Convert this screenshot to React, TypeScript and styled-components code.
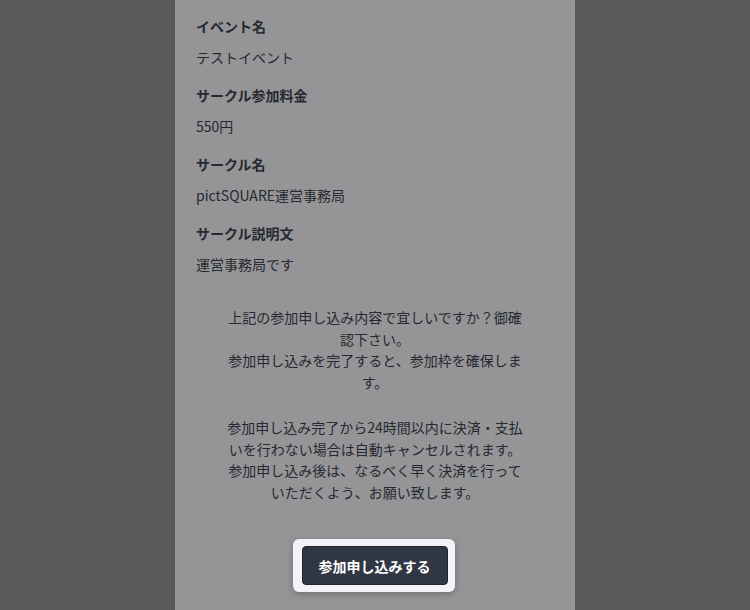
import React from "react";
import styled, { createGlobalStyle } from "styled-components";

const Global = createGlobalStyle`
  html, body { margin: 0; padding: 0; background: #58595a; }
  body { font-family: "Noto Sans CJK JP", "Noto Sans", sans-serif; }
`;

const Page = styled.div`
  display: flex;
  justify-content: center;
  min-height: 610px;
  background: #58595a;
`;

const Panel = styled.div`
  width: 400px;
  box-sizing: border-box;
  background: #959597;
  padding: 16px 21px 20px;
  color: #26292f;
  font-size: 14px;
  line-height: 21px;
`;

const Field = styled.div`
  display: flex;
  flex-direction: column;
  gap: 10px;
  margin-bottom: 17px;
`;

const Label = styled.div`
  font-weight: 700;
`;

const Value = styled.div``;

const Notice = styled.div`
  width: 302px;
  margin: 32px auto 0;
  text-align: center;
  line-height: 21.5px;
`;

const Para = styled.p<{ $gap?: number }>`
  margin: ${(p) => p.$gap ?? 0}px 0 0;
`;

const ButtonRow = styled.div`
  display: flex;
  justify-content: center;
  margin-top: 36px;
  padding-right: 3px;
`;

const Ring = styled.div`
  padding: 7px 7px 7px 9px;
  background: #f3f3f7;
  border-radius: 6px;
  box-shadow: 0 2px 6px rgba(0, 0, 0, 0.25);
`;

const Button = styled.button`
  width: 146px;
  height: 39px;
  background: #2f3644;
  color: #ffffff;
  border: 1px solid #1f242d;
  border-radius: 4px;
  font-family: "Noto Sans CJK JP", "Noto Sans", sans-serif;
  font-size: 14px;
  font-weight: 700;
  cursor: pointer;
`;

const fields = [
  { label: "イベント名", value: "テストイベント" },
  { label: "サークル参加料金", value: "550円" },
  { label: "サークル名", value: "pictSQUARE運営事務局" },
  { label: "サークル説明文", value: "運営事務局です" },
];

export default function App() {
  return (
    <>
      <Global />
      <Page>
        <Panel>
          {fields.map((f) => (
            <Field key={f.label}>
              <Label>{f.label}</Label>
              <Value>{f.value}</Value>
            </Field>
          ))}
          <Notice>
            <Para>上記の参加申し込み内容で宜しいですか？御確認下さい。</Para>
            <Para>参加申し込みを完了すると、参加枠を確保します。</Para>
            <Para $gap={24}>
              参加申し込み完了から24時間以内に決済・支払いを行わない場合は自動キャンセルされます。
            </Para>
            <Para>参加申し込み後は、なるべく早く決済を行っていただくよう、お願い致します。</Para>
          </Notice>
          <ButtonRow>
            <Ring>
              <Button>参加申し込みする</Button>
            </Ring>
          </ButtonRow>
        </Panel>
      </Page>
    </>
  );
}
